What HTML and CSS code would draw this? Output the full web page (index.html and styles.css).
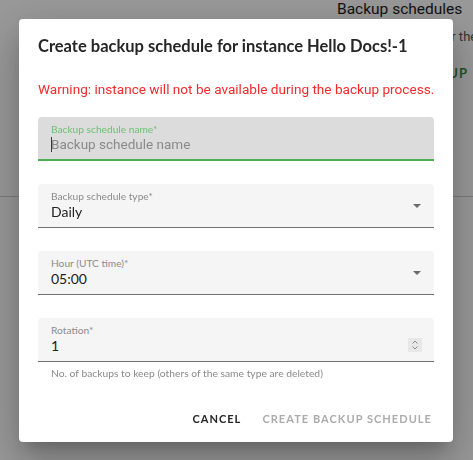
FILE: index.html
```html
<!DOCTYPE html>
<html lang="en">
<head>
<meta charset="utf-8">
<title>Backup schedules</title>
<link rel="stylesheet" href="styles.css">
</head>
<body>
<div class="page">
  <header class="page-head">
    <h2 class="page-title">Backup schedules</h2>
    <p class="page-sub">Backup schedules for the instance</p>
    <span class="page-action">CREATE BACKUP</span>
  </header>
  <div class="page-divider"></div>
</div>

<div class="backdrop"></div>

<div class="dialog" role="dialog">
  <h1 class="dialog-title">Create backup schedule for instance Hello Docs!-1</h1>
  <p class="warning">Warning: instance will not be available during the backup process.</p>

  <div class="field field-focused">
    <span class="field-label">Backup schedule name*</span>
    <div class="field-value"><span class="caret"></span><span class="placeholder">Backup schedule name</span></div>
  </div>

  <div class="field">
    <span class="field-label">Backup schedule type*</span>
    <div class="field-value">Daily</div>
    <svg class="select-arrow" width="10" height="6" viewBox="0 0 10 6"><path d="M1 1h8L5 5z" fill="#6b6b6b"/></svg>
  </div>

  <div class="field">
    <span class="field-label">Hour (UTC time)*</span>
    <div class="field-value">05:00</div>
    <svg class="select-arrow" width="10" height="6" viewBox="0 0 10 6"><path d="M1 1h8L5 5z" fill="#6b6b6b"/></svg>
  </div>

  <div class="field">
    <span class="field-label">Rotation*</span>
    <div class="field-value">1</div>
    <svg class="spinner" width="14" height="14" viewBox="0 0 14 14">
      <rect width="14" height="14" fill="#e8e8e8"/>
      <path d="M4.5 5.5L7 3l2.5 2.5M4.5 8.5L7 11l2.5-2.5" fill="none" stroke="#8a8a8a" stroke-width="1"/>
    </svg>
  </div>
  <p class="helper">No. of backups to keep (others of the same type are deleted)</p>

  <div class="actions">
    <button class="btn btn-cancel">CANCEL</button>
    <button class="btn btn-disabled" disabled>CREATE BACKUP SCHEDULE</button>
  </div>
</div>
</body>
</html>
```
FILE: styles.css
```css
html, body {
  margin: 0;
  height: 100%;
  background: #ffffff;
  overflow: hidden;
}

body {
  font-family: Roboto, "Liberation Sans", sans-serif;
}

/* page behind the modal */
.page {
  width: 100%;
  overflow: hidden;
}

.page-head {
  display: flex;
  flex-direction: column;
  align-items: flex-start;
  padding-left: 337px;
  height: 196px;
  box-sizing: border-box;
  white-space: nowrap;
}

.page-title {
  margin: -1px 0 0;
  font-family: Roboto, sans-serif;
  font-weight: 400;
  font-size: 15.5px;
  line-height: 20px;
  color: #1c1c1c;
}

.page-sub {
  margin: 9px 0 0 -6px;
  font-family: Roboto, sans-serif;
  font-size: 13px;
  line-height: 18px;
  color: #555;
}

.page-action {
  margin: 19px 0 0 0;
  align-self: flex-end;
  margin-right: 5px;
  font-family: Lato, sans-serif;
  font-weight: 700;
  font-size: 13px;
  line-height: 16px;
  letter-spacing: 1px;
  color: #3f8a3f;
}

.page-divider {
  height: 1px;
  background: #d0d0d0;
  box-shadow: 0 1px 2px rgba(0, 0, 0, 0.12);
}

/* modal */
.backdrop {
  position: fixed;
  inset: 0;
  background: rgba(0, 0, 0, 0.4);
}

.dialog {
  position: fixed;
  left: 19px;
  top: 19px;
  width: 434px;
  box-sizing: border-box;
  padding: 15px 19px 6px;
  background: #ffffff;
  border-radius: 4px;
  box-shadow: 0 11px 15px -7px rgba(0, 0, 0, 0.2),
              0 24px 38px 3px rgba(0, 0, 0, 0.14),
              0 9px 46px 8px rgba(0, 0, 0, 0.12);
}

.dialog-title {
  margin: 0;
  font-family: Lato, sans-serif;
  font-weight: 700;
  font-size: 16.5px;
  line-height: 24px;
  color: #262626;
}

.warning {
  margin: 21px 0 0;
  font-family: Roboto, sans-serif;
  font-size: 13.6px;
  line-height: 20px;
  color: #f22a2a;
  white-space: nowrap;
}

.field {
  position: relative;
  height: 44px;
  margin-top: 23px;
  padding: 0 13px;
  box-sizing: border-box;
  background: #f5f5f5;
  border-radius: 4px 4px 0 0;
  border-bottom: 1px solid #717171;
  display: flex;
  flex-direction: column;
}

.field-focused {
  margin-top: 18px;
  background: #dcdcdc;
  border-bottom: 2px solid #4caf50;
}

.field-label {
  margin-top: 6px;
  font-family: Lato, sans-serif;
  font-size: 10.2px;
  line-height: 12px;
  color: #8c8c8c;
}

.field-focused .field-label {
  color: #6fbf73;
}

.field-value {
  margin-top: 1px;
  font-family: Lato, sans-serif;
  font-size: 14px;
  line-height: 17px;
  color: #222;
  display: flex;
  align-items: center;
}

.placeholder {
  font-family: Roboto, sans-serif;
  font-size: 13.5px;
  color: #8a8a8a;
}

.caret {
  width: 1px;
  height: 15px;
  margin-right: -1px;
  background: #3a3a3a;
}

.select-arrow {
  position: absolute;
  right: 12px;
  top: 19px;
}

.spinner {
  position: absolute;
  right: 12px;
  top: 20px;
}

.helper {
  margin: 4px 0 0 13px;
  font-family: Lato, sans-serif;
  font-size: 10.3px;
  line-height: 14px;
  color: #8a8a8a;
}

.actions {
  display: flex;
  justify-content: flex-end;
  gap: 5px;
  margin-top: 20px;
  margin-right: -6px;
}

.btn {
  height: 36px;
  padding: 0 8px;
  border: 0;
  background: transparent;
  font-family: Lato, sans-serif;
  font-weight: 700;
  font-size: 11px;
  letter-spacing: 1.05px;
  cursor: pointer;
}

.btn-cancel {
  color: #262626;
}

.btn-disabled {
  color: #ababab;
  cursor: default;
}
```
